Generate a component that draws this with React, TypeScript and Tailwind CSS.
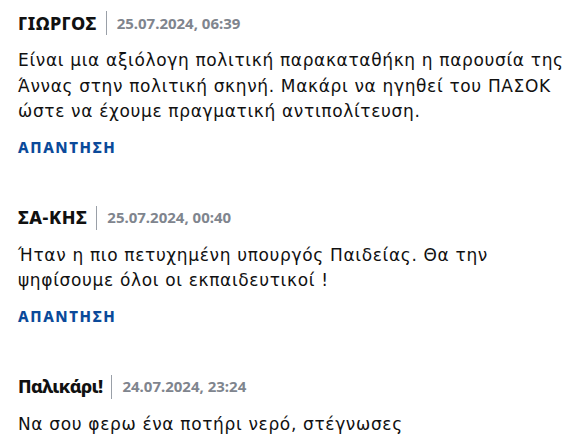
import React from 'react';

const comments = [
  {
    name: 'ΓΙΩΡΓΟΣ',
    nameCls: 'tracking-[0.4px]',
    date: '25.07.2024, 06:39',
    lines: [
      'Είναι μια αξιόλογη πολιτική παρακαταθήκη η παρουσία της',
      'Άννας στην πολιτική σκηνή. Μακάρι να ηγηθεί του ΠΑΣΟΚ',
      'ώστε να έχουμε πραγματική αντιπολίτευση.',
    ],
  },
  {
    name: 'ΣΑ-ΚΗΣ',
    nameCls: 'tracking-[0.6px]',
    date: '25.07.2024, 00:40',
    lines: [
      'Ήταν η πιο πετυχημένη υπουργός Παιδείας. Θα την',
      'ψηφίσουμε όλοι οι εκπαιδευτικοί !',
    ],
  },
  {
    name: 'Παλικάρι!',
    nameCls: 'tracking-[-0.7px]',
    date: '24.07.2024, 23:24',
    lines: ['Να σου φερω ένα ποτήρι νερό, στέγνωσες'],
  },
];

const App: React.FC = () => {
  return (
    <div className="w-[586px] h-[443px] overflow-hidden bg-white px-[18px] pt-[11px]">
      {comments.map((c, idx) => (
        <div key={idx} className="mb-[49px]">
          {/* header */}
          <div className="flex items-center h-[24px] font-['Noto_Sans',sans-serif]">
            <span className={`text-[18px] font-extrabold text-[#111] ${c.nameCls}`}>{c.name}</span>
            <span className="ml-[9px] mr-[10px] w-px h-[24px] bg-[#9aa0a8]" />
            <span className="text-[15px] font-bold text-[#7f858e]">{c.date}</span>
          </div>
          <p className="mt-[13px] text-[17px] leading-[25.5px] tracking-[0.65px] text-[#111] font-['DejaVu_Sans',sans-serif]">
            {c.lines.map((l, i) => (
              <span key={i} className="block whitespace-nowrap">{l}</span>
            ))}
          </p>
          {idx < 2 && (
            <div className="mt-[12px] text-[15px] font-extrabold text-[#0b4a9a] leading-[20px] tracking-[1.6px] font-['Noto_Sans',sans-serif]">ΑΠΑΝΤΗΣΗ</div>
          )}
        </div>
      ))}
    </div>
  );
};

export default App;
